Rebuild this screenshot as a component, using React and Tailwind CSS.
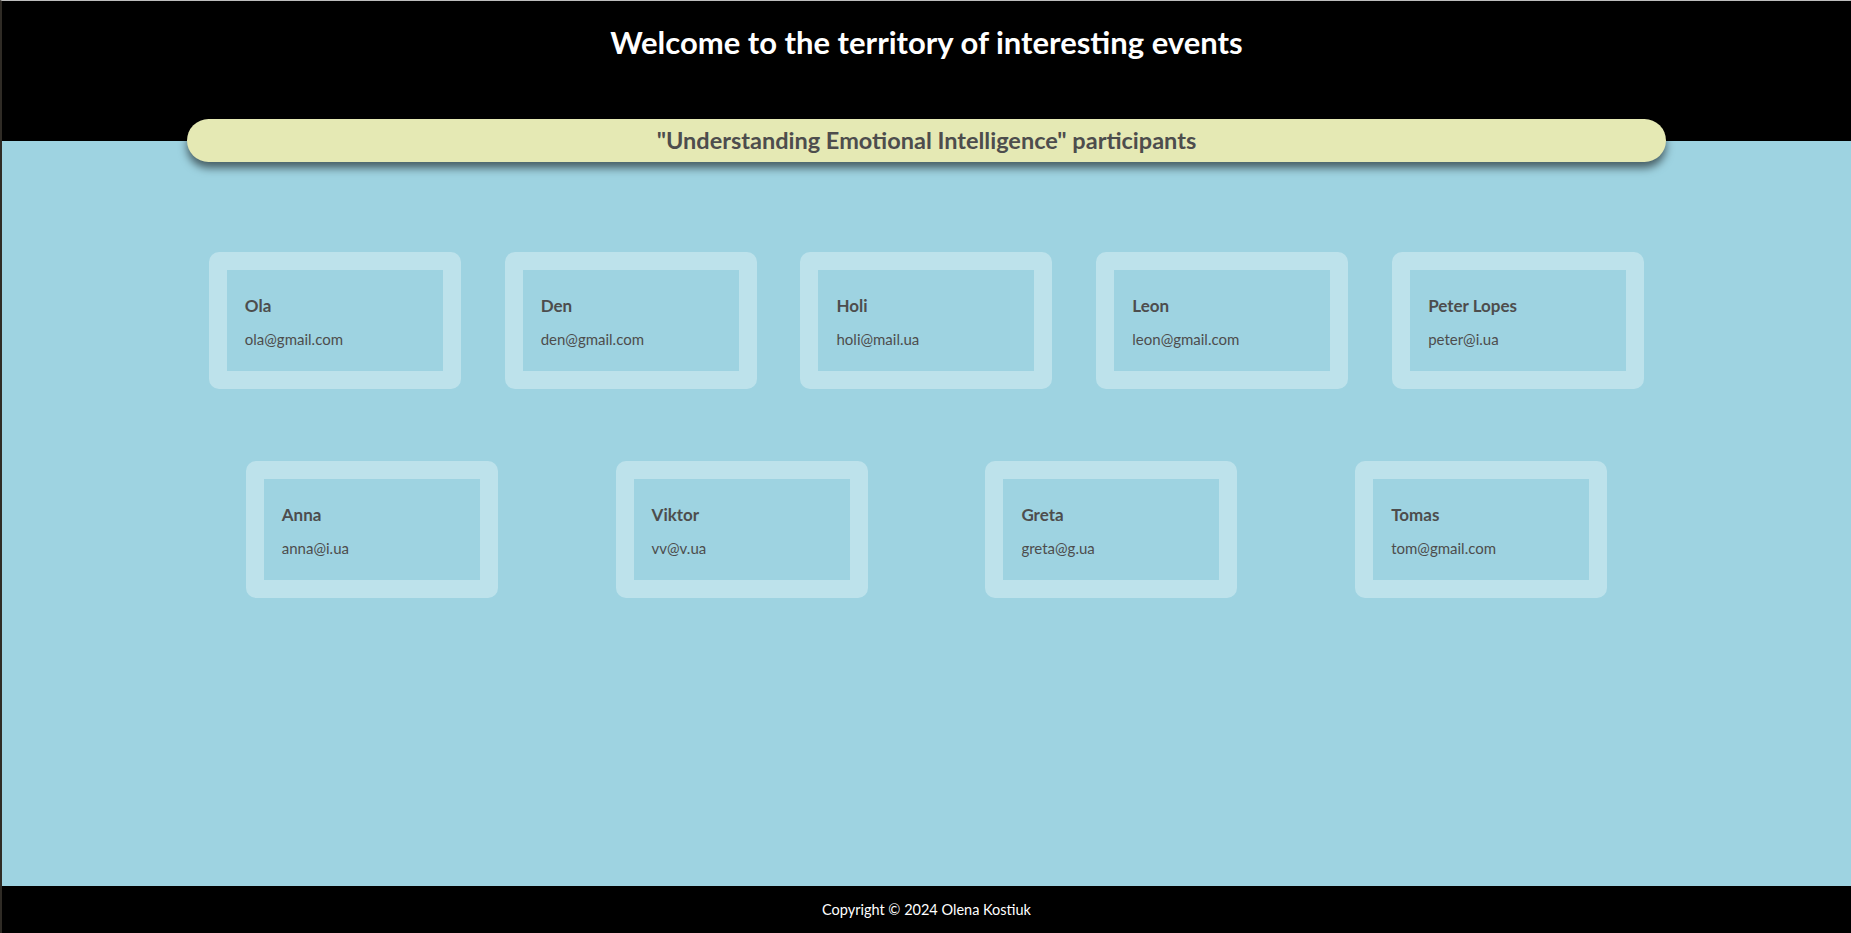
import React from 'react';

const participants = [
  { name: 'Ola', email: 'ola@gmail.com' },
  { name: 'Den', email: 'den@gmail.com' },
  { name: 'Holi', email: 'holi@mail.ua' },
  { name: 'Leon', email: 'leon@gmail.com' },
  { name: 'Peter Lopes', email: 'peter@i.ua' },
  { name: 'Anna', email: 'anna@i.ua' },
  { name: 'Viktor', email: 'vv@v.ua' },
  { name: 'Greta', email: 'greta@g.ua' },
  { name: 'Tomas', email: 'tom@gmail.com' },
];

function ParticipantCard({ name, email }) {
  return (
    <li className="w-[252px] border-[18px] border-[#bde2eb] rounded-[10px] list-none">
      <div className="pt-[24px] pb-[22px] px-[18px]">
        <h3 className="text-[17px] leading-[24px] font-bold text-[#4d4d4d]">{name}</h3>
        <p className="mt-[11px] text-[15px] leading-[20px] text-[#4d4d4d]">{email}</p>
      </div>
    </li>
  );
}

export default function App() {
  return (
    <div
      className="min-h-screen flex flex-col border-t border-t-[#bdbdbd] border-l-2 border-l-[#2f2b25]"
      style={{ fontFamily: 'Lato, "Noto Sans", sans-serif' }}
    >
      <header className="h-[140px] bg-black pt-[23px]">
        <h1 className="text-center text-white text-[31px] leading-[37px] font-bold">
          Welcome to the territory of interesting events
        </h1>
      </header>

      <main className="flex-1 bg-[#9ed3e1] pb-10">
        <div className="w-[80%] mx-auto -mt-[22px] h-[43px] rounded-full bg-[#e5e9b4] shadow-[0_6px_8px_rgba(0,0,0,0.55)] flex items-center justify-center pt-[1px]">
          <h2 className="text-[23.5px] font-bold text-[#4d4d4d]">
            "Understanding Emotional Intelligence" participants
          </h2>
        </div>

        <ul className="w-[80%] mx-auto mt-[90px] flex flex-wrap justify-around gap-y-[72px]">
          {participants.map((p) => (
            <ParticipantCard key={p.email} {...p} />
          ))}
        </ul>
      </main>

      <footer className="h-[47px] bg-black flex items-center justify-center">
        <p className="text-white text-[14.5px]">Copyright © 2024 Olena Kostiuk</p>
      </footer>
    </div>
  );
}
